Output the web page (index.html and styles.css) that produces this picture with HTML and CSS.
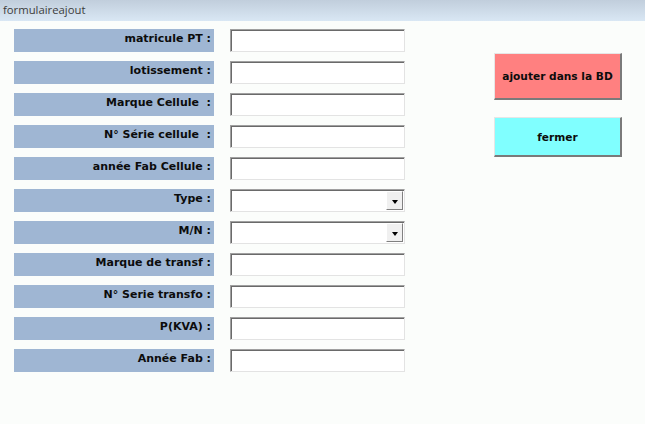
FILE: index.html
```html
<!DOCTYPE html>
<html>
<head>
<meta charset="utf-8">
<link rel="stylesheet" href="styles.css">
</head>
<body>
<div class="titlebar">formulaireajout</div>
<div class="main">
  <div class="form">
    <div class="row"><div class="label">matricule PT :</div><div class="field"></div></div>
    <div class="row"><div class="label">lotissement :</div><div class="field"></div></div>
    <div class="row"><div class="label">Marque Cellule&nbsp; :</div><div class="field"></div></div>
    <div class="row"><div class="label">N° Série cellule&nbsp; :</div><div class="field"></div></div>
    <div class="row"><div class="label">année Fab Cellule :</div><div class="field"></div></div>
    <div class="row"><div class="label">Type :</div><div class="field combo"><span class="drop"><span class="arrow"></span></span></div></div>
    <div class="row"><div class="label">M/N :</div><div class="field combo"><span class="drop"><span class="arrow"></span></span></div></div>
    <div class="row"><div class="label">Marque de transf :</div><div class="field"></div></div>
    <div class="row"><div class="label">N° Serie transfo :</div><div class="field"></div></div>
    <div class="row"><div class="label">P(KVA) :</div><div class="field"></div></div>
    <div class="row"><div class="label">Année Fab :</div><div class="field"></div></div>
  </div>
  <div class="buttons">
    <div class="btn btn-add">ajouter dans la BD</div>
    <div class="btn btn-close">fermer</div>
  </div>
</div>
</body>
</html>
```
FILE: styles.css
```css
html, body {
  margin: 0;
  padding: 0;
}
body {
  width: 645px;
  height: 424px;
  background: #fbfdfb;
  font-family: "DejaVu Sans", sans-serif;
  overflow: hidden;
}
.titlebar {
  height: 21px;
  box-sizing: border-box;
  padding-left: 3px;
  padding-top: 2px;
  background: linear-gradient(#c1cedc, #d9e7f4);
  font-family: "Open Sans", sans-serif;
  font-size: 11.3px;
  line-height: 16px;
  color: #3c3c3c;
}
.main {
  display: flex;
  padding-top: 8px;
  padding-left: 14px;
}
.form {
  display: flex;
  flex-direction: column;
  gap: 9px;
}
.row {
  display: flex;
  gap: 16px;
  height: 23px;
}
.label {
  width: 200px;
  height: 23px;
  box-sizing: border-box;
  background: #9fb6d3;
  text-align: right;
  padding-right: 3px;
  padding-top: 3px;
  font-weight: bold;
  font-size: 11px;
  line-height: 14px;
  color: #0c0c0c;
  white-space: nowrap;
}
.field {
  position: relative;
  width: 175px;
  height: 23px;
  box-sizing: border-box;
  background: #fff;
  border-top: 1px solid #a0a0a0;
  border-left: 1px solid #a0a0a0;
  border-right: 1px solid #e3e3e3;
  border-bottom: 1px solid #e3e3e3;
  box-shadow: inset 1px 1px 0 #6a6a6a;
}
.drop {
  position: absolute;
  right: 1px;
  top: 1px;
  width: 17px;
  height: 19px;
  box-sizing: border-box;
  background: #f0f0f0;
  border-top: 1px solid #fff;
  border-left: 1px solid #fff;
  border-right: 1px solid #808080;
  border-bottom: 1px solid #808080;
  display: flex;
  align-items: center;
  justify-content: center;
}
.arrow {
  width: 0;
  height: 0;
  border-left: 3.5px solid transparent;
  border-right: 3.5px solid transparent;
  border-top: 4px solid #000;
  margin-top: 2px;
}
.buttons {
  display: flex;
  flex-direction: column;
  gap: 17px;
  margin-left: 89px;
  padding-top: 24px;
}
.btn {
  width: 128px;
  box-sizing: border-box;
  display: flex;
  align-items: center;
  justify-content: center;
  font-weight: bold;
  font-size: 10.6px;
  color: #0c0c0c;
  border-top: 1px solid #e6e6e6;
  border-left: 1px solid #e6e6e6;
  border-right: 2px solid #7a7a7a;
  border-bottom: 2px solid #7a7a7a;
}
.btn-add {
  height: 47px;
  background: #ff8080;
}
.btn-close {
  height: 40px;
  background: #80ffff;
}
```
